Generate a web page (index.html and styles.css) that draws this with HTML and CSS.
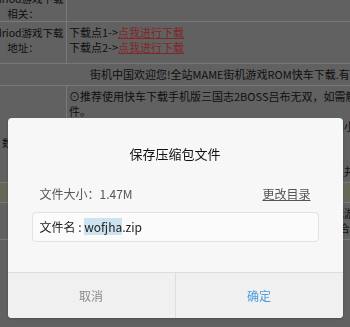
FILE: index.html
```html
<!DOCTYPE html>
<html lang="zh-CN">

<head>
    <meta charset="UTF-8">
    <meta name="viewport" content="width=device-width, initial-scale=1.0">
    <title>保存压缩包文件</title>
    <link rel="stylesheet" href="styles.css">
</head>

<body>
    <div class="page">
        <table class="info">
            <tr class="first">
                <td class="label">Andriod游戏下载<br>相关：</td>
                <td class="value"></td>
            </tr>
            <tr class="links">
                <td class="label">Andriod游戏下载<br>地址：</td>
                <td class="value">下载点1-&gt;<a href="#">点我进行下载</a><br>下载点2-&gt;<a href="#">点我进行下载</a></td>
            </tr>
            <tr>
                <td class="notice" colspan="2">街机中国欢迎您!全站MAME街机游戏ROM快车下载.有问题请留言</td>
            </tr>
            <tr>
                <td class="label label-mid">数据说明</td>
                <td class="value">⊙推荐使用快车下载手机版三国志2BOSS吕布无双，如需解压<br>件。<br>⊙本站所有游戏均来自网络收集整理，请在下载后二十四小时内删荻<br>⊙如有问题<br>⊙请留言<br>⊙下载地址失效请及时反馈给我们，我们会第一时间修复并更新资源菹</td>
            </tr>
            <tr class="tip">
                <td class="label"></td>
                <td class="value">⊙温馨提示</td>
            </tr>
            <tr>
                <td class="label"></td>
                <td class="value">⊙游戏截图与说明均来自互联网，仅供参考，具体以实际游戏为准rom<br>⊙相关游戏[街机模拟器][手机模拟器][安卓模拟器][ROM合集合集]</td>
            </tr>
        </table>
    </div>

    <div class="mask">
        <div class="dialog">
            <div class="dialog-title">保存压缩包文件</div>
            <div class="dialog-body">
                <div class="file-row">
                    <span>文件大小：1.47M</span>
                    <a class="change-dir" href="#">更改目录</a>
                </div>
                <div class="file-input">文件名 : <span class="selected">wofjha</span>.zip</div>
            </div>
            <div class="dialog-footer">
                <button class="btn btn-cancel">取消</button>
                <button class="btn btn-ok">确定</button>
            </div>
        </div>
    </div>
</body>

</html>
```

FILE: styles.css
```css
body {
    margin: 0;
    background: #c2c2c2;
    font-family: "Noto Sans CJK SC", "Noto Sans", sans-serif;
    overflow: hidden;
}

.page {
    margin: -12px 0 0 -20px;
}

.info {
    table-layout: fixed;
    width: 460px;
    border-collapse: collapse;
    font-size: 11px;
    line-height: 15px;
    color: #222;
    white-space: nowrap;
}

.info td {
    background: #c2c2c2;
    padding: 3px 2px;
    vertical-align: top;
    border-bottom: 1px solid #f0f0f0;
}

.info .label {
    width: 86px;
    padding-left: 0;
    padding-right: 0;
    text-align: center;
    font-size: 10.5px;
    border-right: 1px solid #f0f0f0;
}

.first td {
    padding-bottom: 0;
}

.info .label-mid {
    vertical-align: middle;
    padding-top: 16px;
    padding-bottom: 0;
}

.links td {
    padding-bottom: 8px;
}

.info a {
    color: #ff5050;
}

.info .notice {
    padding-left: 110px;
}

.tip td {
    background: #cfcfae;
    padding: 2px;
}

.mask {
    position: fixed;
    top: 0;
    left: 0;
    right: 0;
    bottom: 0;
    background: rgba(0, 0, 0, 0.5);
    display: flex;
    justify-content: center;
    align-items: flex-end;
    padding-bottom: 9px;
}

.dialog {
    width: 335px;
    height: 200px;
    background: #f7f7f7;
    border-radius: 4px;
    display: flex;
    flex-direction: column;
    overflow: hidden;
    box-shadow: 0 1px 3px rgba(0, 0, 0, 0.2);
}

.dialog-title {
    padding-top: 26px;
    line-height: 20px;
    text-align: center;
    font-size: 13px;
    color: #111;
}

.dialog-body {
    flex: 1;
    padding: 20px 24px 0;
}

.file-row {
    display: flex;
    justify-content: space-between;
    padding: 0 8px;
    line-height: 20px;
    font-size: 12px;
    color: #555;
}

.change-dir {
    color: #555;
    text-decoration: underline;
}

.file-input {
    margin-top: 8px;
    height: 30px;
    box-sizing: border-box;
    border: 1px solid #e2e2e2;
    border-radius: 4px;
    background: #fbfbfb;
    padding: 0 7px;
    line-height: 28px;
    font-size: 12px;
    color: #222;
}

.selected {
    background: #cde3f1;
}

.dialog-footer {
    display: flex;
    height: 45px;
    border-top: 1px solid #dddddd;
    background: #f0f0f0;
}

.btn {
    flex: 1;
    border: none;
    background: transparent;
    font-family: inherit;
    font-size: 12px;
    cursor: pointer;
}

.btn-cancel {
    color: #8a8a8a;
    border-right: 1px solid #dddddd;
}

.btn-ok {
    color: #4a9ede;
}
```
